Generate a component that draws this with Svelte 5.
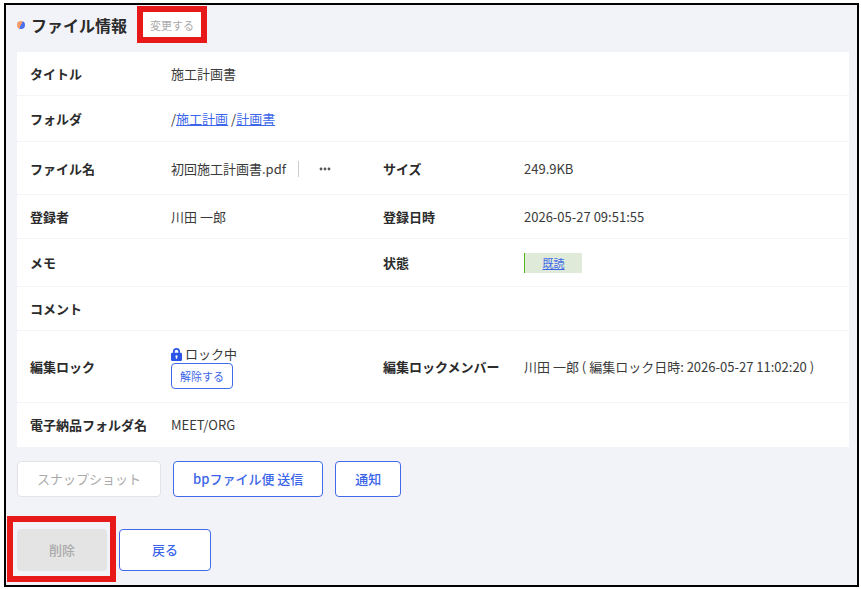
<script lang="ts">
    type Row = {
        label: string;
        value?: string;
        kind?: "folder" | "file" | "status" | "lock";
        size: string;
        subLabel?: string;
        subValue?: string;
    };

    const folders = ["施工計画", "計画書"];

    const rows: Row[] = [
        { label: "タイトル", value: "施工計画書", size: "small" },
        { label: "フォルダ", kind: "folder", size: "medium" },
        {
            label: "ファイル名",
            value: "初回施工計画書.pdf",
            kind: "file",
            size: "large",
            subLabel: "サイズ",
            subValue: "249.9KB",
        },
        {
            label: "登録者",
            value: "川田 一郎",
            size: "small",
            subLabel: "登録日時",
            subValue: "2026-05-27 09:51:55",
        },
        {
            label: "メモ",
            kind: "status",
            size: "tagged",
            subLabel: "状態",
        },
        { label: "コメント", size: "small" },
        {
            label: "編集ロック",
            kind: "lock",
            size: "double",
            subLabel: "編集ロックメンバー",
            subValue: "川田 一郎 ( 編集ロック日時: 2026-05-27 11:02:20 )",
        },
        { label: "電子納品フォルダ名", value: "MEET/ORG", size: "small" },
    ];
</script>

<div class="page">
    <main class="panel">
        <header>
            <span class="dot"></span>
            <h1>ファイル情報</h1>
            <button class="btn-change" disabled>変更する</button>
        </header>

        <table>
            <colgroup>
                <col class="col-label" />
                <col class="col-value" />
                <col class="col-label" />
                <col />
            </colgroup>
            <tbody>
                {#each rows as row}
                    <tr class={row.size}>
                        <th scope="row">{row.label}</th>
                        <td colspan={row.subLabel ? 1 : 3}>
                            {#if row.kind === "folder"}
                                {#each folders as folder, i}
                                    {i > 0 ? " /" : "/"}<a href="#folder">{folder}</a>
                                {/each}
                            {:else if row.kind === "file"}
                                <div class="file">
                                    <span>{row.value}</span>
                                    <button class="btn-more" aria-label="メニュー">
                                        <svg viewBox="0 0 12 4" width="12" height="4">
                                            <circle cx="2" cy="2" r="1.4" />
                                            <circle cx="6" cy="2" r="1.4" />
                                            <circle cx="10" cy="2" r="1.4" />
                                        </svg>
                                    </button>
                                </div>
                            {:else if row.kind === "lock"}
                                <div class="lock">
                                    <svg viewBox="0 0 11 13" width="11" height="13">
                                        <path
                                            class="shackle"
                                            d="M2.8 5.5V3.6a2.7 2.7 0 0 1 5.4 0v1.9"
                                        />
                                        <rect y="4.8" width="11" height="8.2" rx="1.2" />
                                        <path
                                            class="keyhole"
                                            d="M5.5 7.3a1.2 1.2 0 0 1 .6 2.2v1.3H4.9V9.5a1.2 1.2 0 0 1 .6-2.2z"
                                        />
                                    </svg>
                                    <span>ロック中</span>
                                </div>
                                <button class="btn-unlock">解除する</button>
                            {:else}
                                {row.value ?? ""}
                            {/if}
                        </td>
                        {#if row.subLabel}
                            <th scope="row">{row.subLabel}</th>
                            <td>
                                {#if row.kind === "status"}
                                    <span class="tag"><a href="#read">既読</a></span>
                                {:else}
                                    {row.subValue}
                                {/if}
                            </td>
                        {/if}
                    </tr>
                {/each}
            </tbody>
        </table>

        <div class="actions">
            <button class="btn" disabled>スナップショット</button>
            <button class="btn">bpファイル便 送信</button>
            <button class="btn">通知</button>
        </div>

        <div class="footer">
            <div class="marked">
                <button class="btn-delete" disabled>削除</button>
            </div>
            <button class="btn btn-back">戻る</button>
        </div>
    </main>
</div>

<style>
    :global(body) {
        background: #fff;
    }

    .page {
        padding: 3px 2px 2px 4px;
        font-family: "Noto Sans CJK JP", sans-serif;
        font-size: 13px;
        line-height: 18px;
        color: #3a3a3a;
    }

    .panel {
        padding: 7px 8px 14px 11px;
        border: 2px solid #000;
        background: #f2f3f8;
    }

    header {
        display: flex;
        align-items: center;
        margin-bottom: 15px;
    }

    .dot {
        width: 8px;
        height: 8px;
        margin-right: 6px;
        border-radius: 50%;
        background: linear-gradient(120deg, #f79a6b 50%, #4a6ff0 50%);
    }

    h1 {
        margin: 0 16px 0 0;
        font-size: 16px;
        line-height: 24px;
        font-weight: 700;
        color: #2b2b2b;
    }

    button {
        box-sizing: border-box;
        padding: 0;
        border: 1px solid #4169e8;
        border-radius: 4px;
        background: #fff;
        color: #3c66ea;
        font-family: inherit;
        font-size: 13px;
        line-height: 18px;
        cursor: pointer;
    }

    button:disabled {
        border-color: #e3e3e5;
        color: #aaa;
        cursor: default;
    }

    .btn-change {
        height: 25px;
        padding: 0 7px;
        border: 0;
        border-radius: 0;
        outline: 6px solid #e81919;
        font-size: 11px;
    }

    table {
        width: 100%;
        table-layout: fixed;
        border-collapse: collapse;
        background: #fff;
    }

    .col-label {
        width: 141px;
    }

    .col-value {
        width: 212px;
    }

    tr {
        box-shadow: inset 0 -1px #f3f4f6;
    }

    tr:last-child {
        box-shadow: none;
    }

    .small {
        height: 44px;
    }

    .medium {
        height: 46px;
    }

    .tagged {
        height: 48px;
    }

    .large {
        height: 53px;
    }

    .double {
        height: 72px;
    }

    th,
    td {
        padding: 0 0 0 13px;
        text-align: left;
        vertical-align: middle;
        white-space: nowrap;
    }

    th {
        font-weight: 700;
        color: #2b2b2b;
    }

    a {
        color: #3c66ea;
    }

    .file,
    .lock {
        display: flex;
        align-items: center;
    }

    .btn-more {
        display: flex;
        align-items: center;
        height: 16px;
        margin-left: 12px;
        padding: 0 20px;
        border: 0;
        border-left: 1px solid #ccc;
        border-radius: 0;
    }

    .btn-more circle {
        fill: #555;
    }

    .lock {
        gap: 3px;
    }

    .lock rect {
        fill: #2b55e6;
    }

    .shackle {
        fill: none;
        stroke: #2b55e6;
        stroke-width: 1.7;
    }

    .keyhole {
        fill: #fff;
    }

    .btn-unlock {
        display: block;
        height: 26px;
        padding: 0 8px;
        font-size: 11px;
    }

    .tag {
        display: block;
        box-sizing: border-box;
        width: 58px;
        height: 20px;
        border-left: 1px solid #4fb81f;
        background: #dfead9;
        font-size: 11px;
        line-height: 20px;
        text-align: center;
    }

    .actions,
    .footer {
        display: flex;
        gap: 12px;
    }

    .actions {
        margin: 14px 0 32px;
    }

    .btn {
        height: 36px;
        padding: 0 19px;
        font-weight: 500;
    }

    .btn:disabled {
        font-weight: 400;
    }

    .marked {
        position: relative;
    }

    /* callout frame drawn over the panel, around the delete button */
    .marked::after {
        content: "";
        position: absolute;
        inset: -13px -9px -11px -10px;
        border: 6px solid #e81919;
        pointer-events: none;
    }

    .btn-delete {
        width: 90px;
        height: 42px;
        border: 0;
        background: #e4e4e4;
        font-weight: 500;
    }

    .btn-back {
        width: 92px;
        height: 42px;
    }
</style>
